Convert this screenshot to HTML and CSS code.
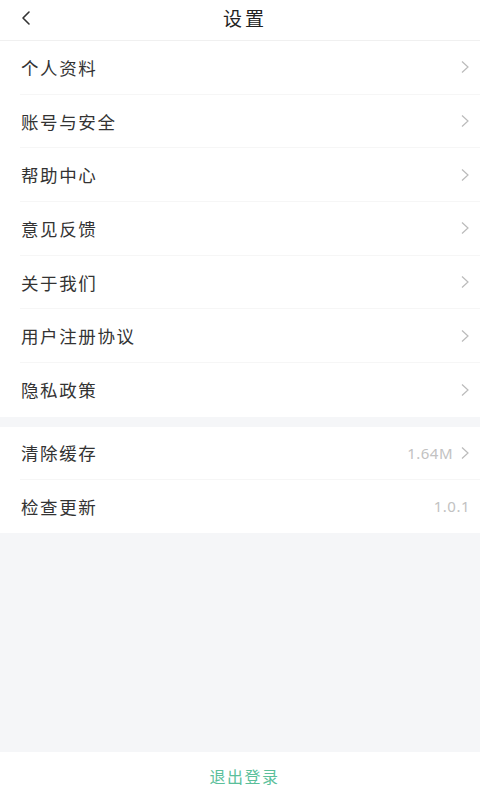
FILE: index.html
```html
<!DOCTYPE html>
<html lang="zh">
<head>
<meta charset="utf-8">
<link rel="stylesheet" href="styles.css">
</head>
<body>
<div class="page">
  <header class="nav">
    <span class="back"><svg width="12" height="16" viewBox="0 0 12 16"><path d="M9 2 L3 8 L9 14" fill="none" stroke="#333" stroke-width="1.6" stroke-linecap="round" stroke-linejoin="round"/></svg></span>
    <h1 class="title">设置</h1>
  </header>
  <section class="group">
    <div class="row"><span class="label">个人资料</span><span class="right"><svg class="chev" width="10" height="14" viewBox="0 0 10 14"><path d="M2 1.5 L8 7 L2 12.5" fill="none" stroke="#bbb" stroke-width="1.2"/></svg></span></div>
    <div class="row"><span class="label">账号与安全</span><span class="right"><svg class="chev" width="10" height="14" viewBox="0 0 10 14"><path d="M2 1.5 L8 7 L2 12.5" fill="none" stroke="#bbb" stroke-width="1.2"/></svg></span></div>
    <div class="row"><span class="label">帮助中心</span><span class="right"><svg class="chev" width="10" height="14" viewBox="0 0 10 14"><path d="M2 1.5 L8 7 L2 12.5" fill="none" stroke="#bbb" stroke-width="1.2"/></svg></span></div>
    <div class="row"><span class="label">意见反馈</span><span class="right"><svg class="chev" width="10" height="14" viewBox="0 0 10 14"><path d="M2 1.5 L8 7 L2 12.5" fill="none" stroke="#bbb" stroke-width="1.2"/></svg></span></div>
    <div class="row"><span class="label">关于我们</span><span class="right"><svg class="chev" width="10" height="14" viewBox="0 0 10 14"><path d="M2 1.5 L8 7 L2 12.5" fill="none" stroke="#bbb" stroke-width="1.2"/></svg></span></div>
    <div class="row"><span class="label">用户注册协议</span><span class="right"><svg class="chev" width="10" height="14" viewBox="0 0 10 14"><path d="M2 1.5 L8 7 L2 12.5" fill="none" stroke="#bbb" stroke-width="1.2"/></svg></span></div>
    <div class="row last"><span class="label">隐私政策</span><span class="right"><svg class="chev" width="10" height="14" viewBox="0 0 10 14"><path d="M2 1.5 L8 7 L2 12.5" fill="none" stroke="#bbb" stroke-width="1.2"/></svg></span></div>
  </section>
  <section class="group second">
    <div class="row short"><span class="label">清除缓存</span><span class="right"><span class="value">1.64M</span><svg class="chev" width="10" height="14" viewBox="0 0 10 14"><path d="M2 1.5 L8 7 L2 12.5" fill="none" stroke="#bbb" stroke-width="1.2"/></svg></span></div>
    <div class="row short last"><span class="label">检查更新</span><span class="right"><span class="value">1.0.1</span></span></div>
  </section>
  <div class="spacer"></div>
  <footer class="logout">退出登录</footer>
</div>
</body>
</html>
```
FILE: styles.css
```css
* { box-sizing: border-box; margin: 0; padding: 0; }
html, body { height: 100%; }
body {
  background: #f5f6f8;
  font-family: "Noto Sans CJK SC", "Noto Sans", sans-serif;
  color: #333;
}
.page {
  display: flex;
  flex-direction: column;
  height: 800px;
}
.nav {
  height: 41px;
  background: #fff;
  border-bottom: 1px solid #f0f0f0;
  display: flex;
  align-items: center;
  justify-content: center;
  padding-bottom: 5px;
  position: relative;
}
.back {
  position: absolute;
  left: 20px;
  top: 10px;
  display: flex;
}
.title {
  font-size: 19px;
  font-weight: 400;
  letter-spacing: 3px;
  color: #222;
  margin-left: 10px;
}
.group {
  background: #fff;
}
.group.second {
  margin-top: 10px;
}
.row {
  height: 53.7px;
  margin-left: 20px;
  padding-right: 10px;
  display: flex;
  align-items: center;
  justify-content: space-between;
  border-bottom: 1px solid #f6f6f6;
}
.row.short {
  height: 53px;
}
.row.last {
  border-bottom: none;
}
.label {
  font-size: 17.5px;
  letter-spacing: 1.6px;
  color: #333;
  padding-left: 1px;
}
.right {
  display: flex;
  align-items: center;
  gap: 7px;
  color: #bbb;
}
.value {
  font-family: "Noto Sans", sans-serif;
  font-size: 15px;
  color: #c2c2c2;
  letter-spacing: 0.5px;
}
.chev { display: block; }
.spacer { flex: 1; }
.logout {
  height: 48px;
  background: #fff;
  display: flex;
  align-items: center;
  justify-content: center;
  padding-left: 9px;
  font-size: 16px;
  letter-spacing: 1.5px;
  color: #5bbf9b;
}
```
